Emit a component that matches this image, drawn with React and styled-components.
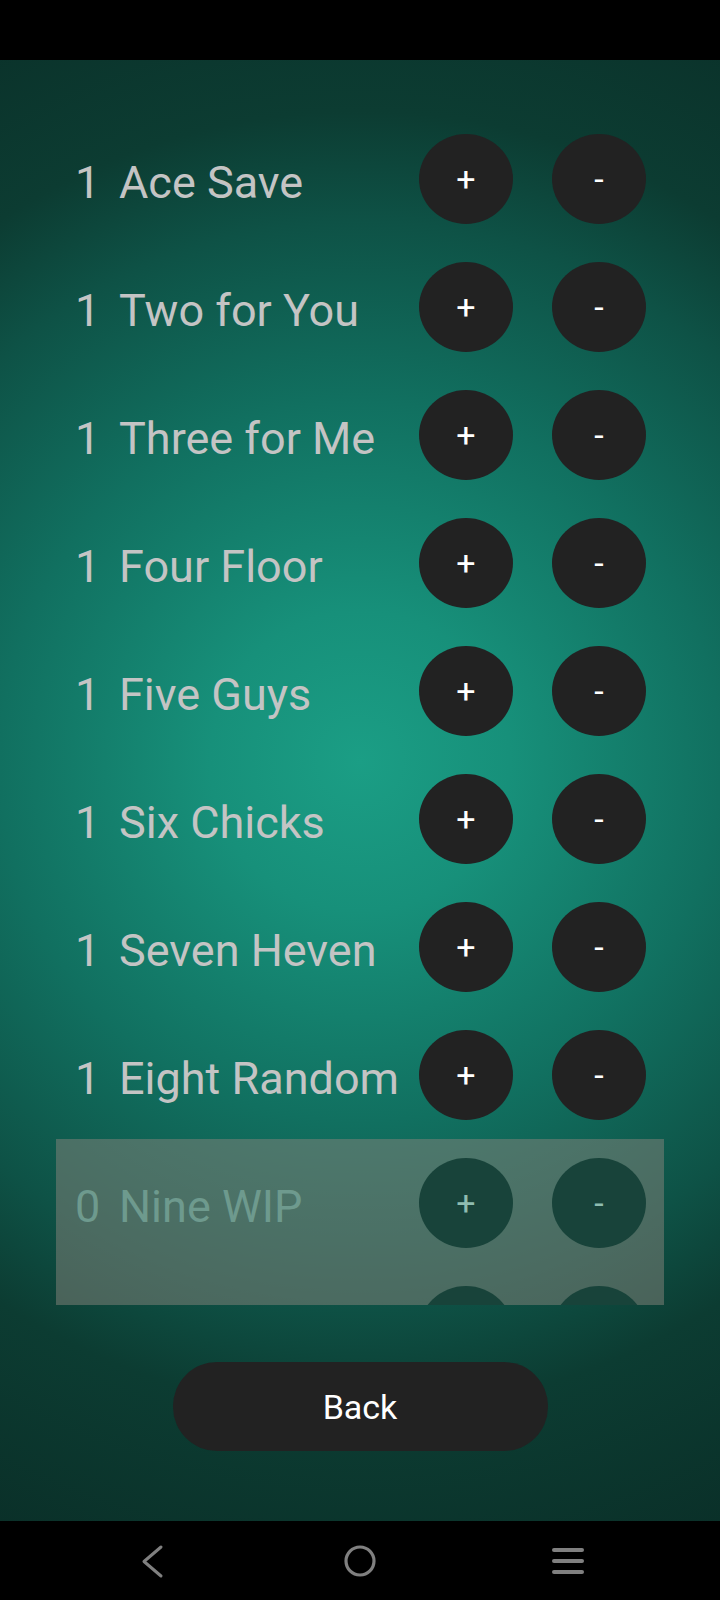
import React from "react";
import styled, { createGlobalStyle } from "styled-components";

const GlobalStyle = createGlobalStyle`
  html, body {
    margin: 0;
    padding: 0;
    background: #000;
  }
  * {
    box-sizing: border-box;
  }
`;

const Screen = styled.div`
  width: 720px;
  height: 1600px;
  display: flex;
  flex-direction: column;
  font-family: Roboto, "Liberation Sans", sans-serif;
  background: #000;
`;

const StatusBar = styled.div`
  height: 60px;
  background: #000;
`;

const Main = styled.main`
  height: 1461px;
  display: flex;
  flex-direction: column;
  align-items: center;
  background: radial-gradient(
    circle at 50% 48%,
    #1b9e85 0px,
    #17907a 150px,
    #117060 360px,
    #0e5246 540px,
    #0c3c32 650px,
    #0a2f28 860px
  );
`;

const ListArea = styled.div`
  margin-top: 55px;
  width: 608px;
  height: 1190px;
  overflow: hidden;
  display: flex;
  flex-direction: column;
`;

const Row = styled.div`
  height: 128px;
  flex-shrink: 0;
  display: flex;
  align-items: center;
  padding: 0 18px 0 19px;
`;

const Count = styled.span`
  width: 44px;
  padding-top: 7px;
  font-size: 45px;
  color: ${(p) => (p.$disabled ? "#6e9a8e" : "#c4c4c4")};
`;

const Name = styled.span`
  flex: 1;
  padding-top: 7px;
  font-size: 45px;
  white-space: nowrap;
  color: ${(p) => (p.$disabled ? "#6e9a8e" : "#c4c4c4")};
`;

const Buttons = styled.div`
  display: flex;
  gap: 39px;
`;

const RoundButton = styled.button`
  width: 94px;
  height: 90px;
  border: none;
  border-radius: 50%;
  padding: 0;
  font-family: inherit;
  font-size: 34px;
  line-height: 1;
  display: flex;
  align-items: center;
  justify-content: center;
  background: ${(p) => (p.$disabled ? "#18433a" : "#222222")};
  color: ${(p) => (p.$disabled ? "#8fbcb0" : "#ffffff")};
`;

const DisabledGroup = styled.div`
  flex-shrink: 0;
  background: rgba(136, 132, 124, 0.5);
`;

const BackButton = styled.button`
  margin-top: 57px;
  width: 375px;
  height: 89px;
  border: none;
  border-radius: 44px;
  background: #222222;
  color: #fff;
  font-family: inherit;
  font-size: 34px;
`;

const NavBar = styled.nav`
  height: 79px;
  background: #000;
  display: flex;
  align-items: center;
  justify-content: center;
  gap: 168px;
`;

const NavIcon = styled.div`
  width: 40px;
  height: 40px;
  display: flex;
  align-items: center;
  justify-content: center;
`;

const items = [
  { count: 1, name: "Ace Save" },
  { count: 1, name: "Two for You" },
  { count: 1, name: "Three for Me" },
  { count: 1, name: "Four Floor" },
  { count: 1, name: "Five Guys" },
  { count: 1, name: "Six Chicks" },
  { count: 1, name: "Seven Heven" },
  { count: 1, name: "Eight Random" },
];

const wip = [
  { count: 0, name: "Nine WIP" },
  { count: 0, name: "Ten WIP" },
];

const ItemRow = ({ count, name, disabled }) => (
  <Row>
    <Count $disabled={disabled}>{count}</Count>
    <Name $disabled={disabled}>{name}</Name>
    <Buttons>
      <RoundButton $disabled={disabled}>+</RoundButton>
      <RoundButton $disabled={disabled}>-</RoundButton>
    </Buttons>
  </Row>
);

export default function App() {
  return (
    <Screen>
      <GlobalStyle />
      <StatusBar />
      <Main>
        <ListArea>
          {items.map((it) => (
            <ItemRow key={it.name} {...it} />
          ))}
          <DisabledGroup>
            {wip.map((it) => (
              <ItemRow key={it.name} {...it} disabled />
            ))}
          </DisabledGroup>
        </ListArea>
        <BackButton>Back</BackButton>
      </Main>
      <NavBar>
        <NavIcon>
          <svg width="40" height="40" viewBox="0 0 40 40">
            <path
              d="M29 6 L12 20.5 L29 35"
              fill="none"
              stroke="#808080"
              strokeWidth="3"
              strokeLinecap="round"
              strokeLinejoin="round"
            />
          </svg>
        </NavIcon>
        <NavIcon>
          <svg width="40" height="40" viewBox="0 0 40 40">
            <circle cx="20" cy="20" r="14" fill="none" stroke="#808080" strokeWidth="3.2" />
          </svg>
        </NavIcon>
        <NavIcon>
          <svg width="40" height="40" viewBox="0 0 40 40">
            <g stroke="#808080" strokeWidth="4" strokeLinecap="round">
              <line x1="6" y1="9" x2="34" y2="9" />
              <line x1="6" y1="20" x2="34" y2="20" />
              <line x1="6" y1="31" x2="34" y2="31" />
            </g>
          </svg>
        </NavIcon>
      </NavBar>
    </Screen>
  );
}
